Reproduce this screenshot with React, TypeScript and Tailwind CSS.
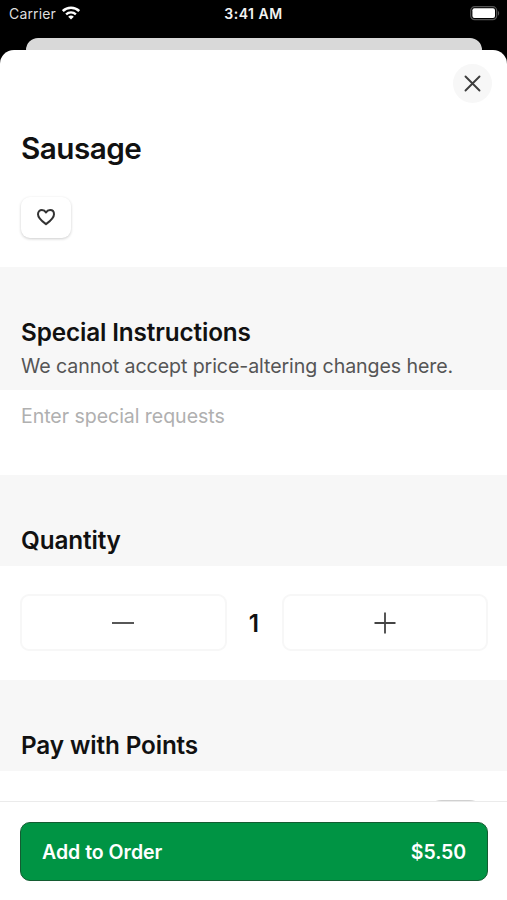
import { useState, type ReactNode } from "react";

function StatusBar() {
  return (
    <div className="relative flex h-[38px] shrink-0 items-start justify-between pl-[9px] pr-[7px] text-[14px] leading-7 text-white">
      <div className="flex items-start gap-[6px]">
        <span className="tracking-[0.15px] text-[#dedede]">Carrier</span>
        <svg className="mt-[6px]" width="18" height="14" viewBox="0 0 18 14" fill="none">
          <path d="M.8 5C5.2.7 12.800.7 17.200 5" stroke="white" strokeWidth="2.5" />
          <path d="M4.1 8.300c2.800-2.600 7-2.600 9.800 0" stroke="white" strokeWidth="2.400" />
          <path d="M9 13.400 6.200 10.700c1.600-1.500 4-1.500 5.600 0L9 13.400Z" fill="white" />
        </svg>
      </div>
      <span className="absolute left-1/2 top-0 -translate-x-1/2 whitespace-nowrap font-semibold tracking-[0.5px] text-[#f2f2f2]">
        3:41 AM
      </span>
      <svg className="mt-[6px]" width="30" height="15" viewBox="0 0 30 15" fill="none">
        <rect x="0.7" y="0.7" width="26" height="13" rx="4" stroke="#555" strokeWidth="1.2" />
        <rect x="2.400" y="2.300" width="22.600" height="9.800" rx="2" fill="white" />
        <path d="M28 5c1.500.6 1.500 4 0 4.600V5Z" fill="#555" />
      </svg>
    </div>
  );
}

function SectionHeader({ title, children }: { title: string; children?: ReactNode }) {
  return (
    <div className="bg-[#f7f7f7] px-[21px] pt-[49px]">
      <h2 className="text-[24.3px] font-semibold leading-8 tracking-[-0.13px] text-[#111]">{title}</h2>
      {children}
    </div>
  );
}

export default function App() {
  const [quantity, setQuantity] = useState(1);
  const [liked, setLiked] = useState(false);

  return (
    <div className="flex h-[900px] w-[507px] flex-col overflow-hidden bg-black font-['Inter',sans-serif]">
      <StatusBar />
      <div className="ml-[26px] mr-[25px] h-3 shrink-0 rounded-t-[12px] bg-[#d9d9d9]" />

      <div className="flex min-h-0 flex-1 flex-col overflow-hidden rounded-t-[14px] bg-white">
        <main className="min-h-0 flex-1 overflow-hidden">
          <div className="flex justify-end pr-[15px] pt-[14px]">
            <button
              aria-label="Close"
              className="flex size-[39px] items-center justify-center rounded-full bg-[#f7f7f7]"
            >
              <svg width="19" height="19" viewBox="0 0 19 19" stroke="#3d3d3d" strokeWidth="1.900" strokeLinecap="round">
                <path d="m2.500 2.500 14 14M16.500 2.500l-14 14" />
              </svg>
            </button>
          </div>

          <div className="h-[164px] px-[21px] pt-[25px]">
            <h1 className="text-[29.7px] font-semibold leading-10 tracking-[-0.55px] text-[#111]">Sausage</h1>
            <button
              aria-label="Favorite"
              onClick={() => setLiked(!liked)}
              className="mt-[29px] flex h-[41px] w-[50px] items-center justify-center rounded-[9px] bg-white pb-[2px] shadow-[0_1px_3px_rgba(0,0,0,0.2)]"
            >
              <svg width="20" height="18" viewBox="0 0 20 18" fill={liked ? "#333" : "none"}>
                <path
                  d="M10 16.100C7.200 14 2 10.500 2 6.200 2 3.700 3.700 2 5.900 2 7.700 2 9.200 3 10 4.400 10.800 3 12.300 2 14.100 2 16.300 2 18 3.700 18 6.200 18 10.500 12.800 14 10 16.100Z"
                  stroke="#333"
                  strokeWidth="2"
                  strokeLinejoin="round"
                />
              </svg>
            </button>
          </div>

          <SectionHeader title="Special Instructions">
            <p className="h-[42px] whitespace-nowrap pt-[4px] text-[19.6px] leading-7 tracking-[-0.09px] text-[#555]">
              We cannot accept price-altering changes here.
            </p>
          </SectionHeader>
          <textarea
            placeholder="Enter special requests"
            className="block h-[85px] w-full resize-none px-[21px] pt-[12px] text-[19.6px] leading-7 tracking-[-0.07px] text-[#111] outline-none placeholder:text-[#b0b0b0]"
          />

          <SectionHeader title="Quantity">
            <div className="h-[10px]" />
          </SectionHeader>
          <div className="flex h-[114px] items-center pb-px pl-[20px] pr-[19px]">
            <button
              aria-label="Decrease"
              onClick={() => setQuantity(Math.max(1, quantity - 1))}
              className="flex h-[57px] flex-1 items-center justify-center rounded-[9px] border-2 border-[#f7f7f7]"
            >
              <svg width="24" height="24" viewBox="0 0 24 24" stroke="#444" strokeWidth="1.800">
                <path d="M1 12h22" />
              </svg>
            </button>
            <span className="w-[55px] text-center text-[24.3px] font-semibold leading-8 text-[#111]">{quantity}</span>
            <button
              aria-label="Increase"
              onClick={() => setQuantity(quantity + 1)}
              className="flex h-[57px] flex-1 items-center justify-center rounded-[9px] border-2 border-[#f7f7f7]"
            >
              <svg width="24" height="24" viewBox="0 0 24 24" stroke="#444" strokeWidth="1.800">
                <path d="M1.500 12h21M12 1.500v21" />
              </svg>
            </button>
          </div>

          <SectionHeader title="Pay with Points">
            <div className="h-[10px]" />
          </SectionHeader>
          <div className="flex justify-end pr-[17px] pt-[29px]">
            <div className="h-[42px] w-[69px] rounded-full bg-[#d0d0d0]" />
          </div>
        </main>

        <footer className="h-[99px] shrink-0 border-t border-[#ebebeb] bg-white pl-[20px] pr-[19px] pt-[20px]">
          <button className="flex h-[59px] w-full items-center justify-between rounded-[10px] border border-[#145c32] bg-[#009444] px-[21px] pt-[2px] text-[19.5px] font-semibold text-white">
            <span>Add to Order</span>
            <span className="tracking-[-0.1px]">${(quantity * 5.5).toFixed(2)}</span>
          </button>
        </footer>
      </div>
    </div>
  );
}
